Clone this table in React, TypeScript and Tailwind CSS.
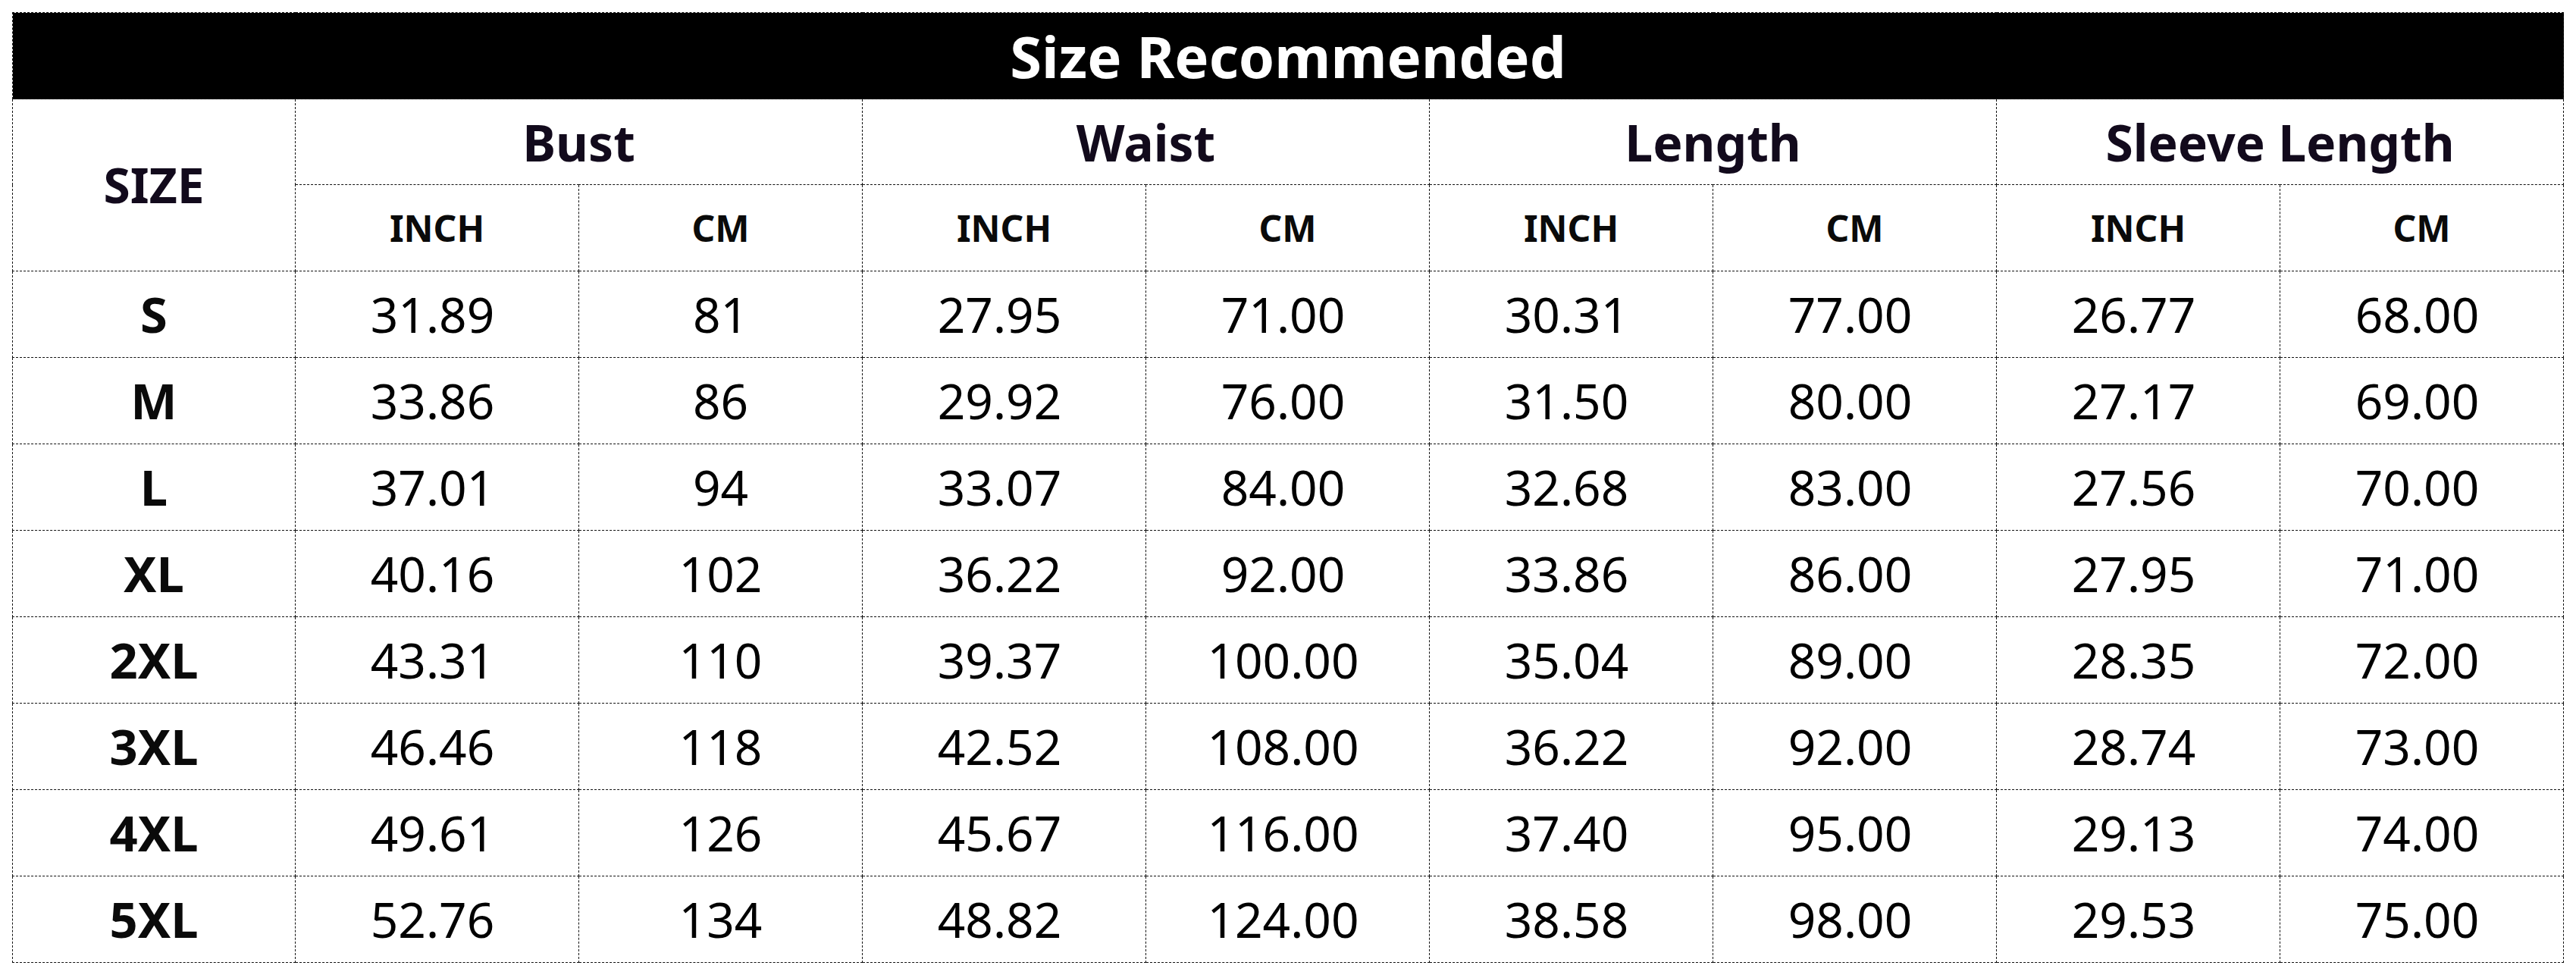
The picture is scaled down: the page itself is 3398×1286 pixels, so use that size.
import React from 'react';

const groups = ['Bust', 'Waist', 'Length', 'Sleeve Length'];

const rows: [string, string[]][] = [
  ['S', ['31.89', '81', '27.95', '71.00', '30.31', '77.00', '26.77', '68.00']],
  ['M', ['33.86', '86', '29.92', '76.00', '31.50', '80.00', '27.17', '69.00']],
  ['L', ['37.01', '94', '33.07', '84.00', '32.68', '83.00', '27.56', '70.00']],
  ['XL', ['40.16', '102', '36.22', '92.00', '33.86', '86.00', '27.95', '71.00']],
  ['2XL', ['43.31', '110', '39.37', '100.00', '35.04', '89.00', '28.35', '72.00']],
  ['3XL', ['46.46', '118', '42.52', '108.00', '36.22', '92.00', '28.74', '73.00']],
  ['4XL', ['49.61', '126', '45.67', '116.00', '37.40', '95.00', '29.13', '74.00']],
  ['5XL', ['52.76', '134', '48.82', '124.00', '38.58', '98.00', '29.53', '75.00']],
];

const cell = 'border border-dashed border-[#111] text-center align-middle p-0';

export default function App() {
  return (
    <div className="bg-white w-[3398px] h-[1286px] p-4 font-['Noto_Sans',sans-serif]">
      <table className="w-[3366px] border-collapse table-fixed">
        <colgroup>
          <col className="w-[373px]" />
          {Array.from({ length: 8 }).map((_, i) => (
            <col key={i} />
          ))}
        </colgroup>
        <thead>
          <tr className="h-[114px]">
            <th colSpan={9} className={`${cell} bg-black text-white text-[76px] font-bold leading-none`}>
              Size Recommended
            </th>
          </tr>
          <tr className="h-[113px]">
            <th rowSpan={2} className={`${cell} text-[#120a1c] text-[64px] font-bold leading-none`}>
              SIZE
            </th>
            {groups.map((g) => (
              <th key={g} colSpan={2} className={`${cell} text-[#120a1c] text-[66px] font-bold leading-none`}>
                {g}
              </th>
            ))}
          </tr>
          <tr className="h-[114px]">
            {groups.map((g) => (
              <React.Fragment key={g}>
                <th className={`${cell} text-[#0a0a0a] text-[48px] font-bold leading-none`}>INCH</th>
                <th className={`${cell} text-[#0a0a0a] text-[48px] font-bold leading-none`}>CM</th>
              </React.Fragment>
            ))}
          </tr>
        </thead>
        <tbody>
          {rows.map(([size, vals]) => (
            <tr key={size} className="h-[114px]">
              <td className={`${cell} text-[#0a0a0a] text-[65px] font-bold leading-none`}>{size}</td>
              {vals.map((v, i) => (
                <td
                  key={i}
                  className={`${cell} text-black text-[64px] leading-none ${v.includes('.') ? 'pr-[12px]' : ''}`}
                >
                  {v}
                </td>
              ))}
            </tr>
          ))}
        </tbody>
      </table>
    </div>
  );
}
